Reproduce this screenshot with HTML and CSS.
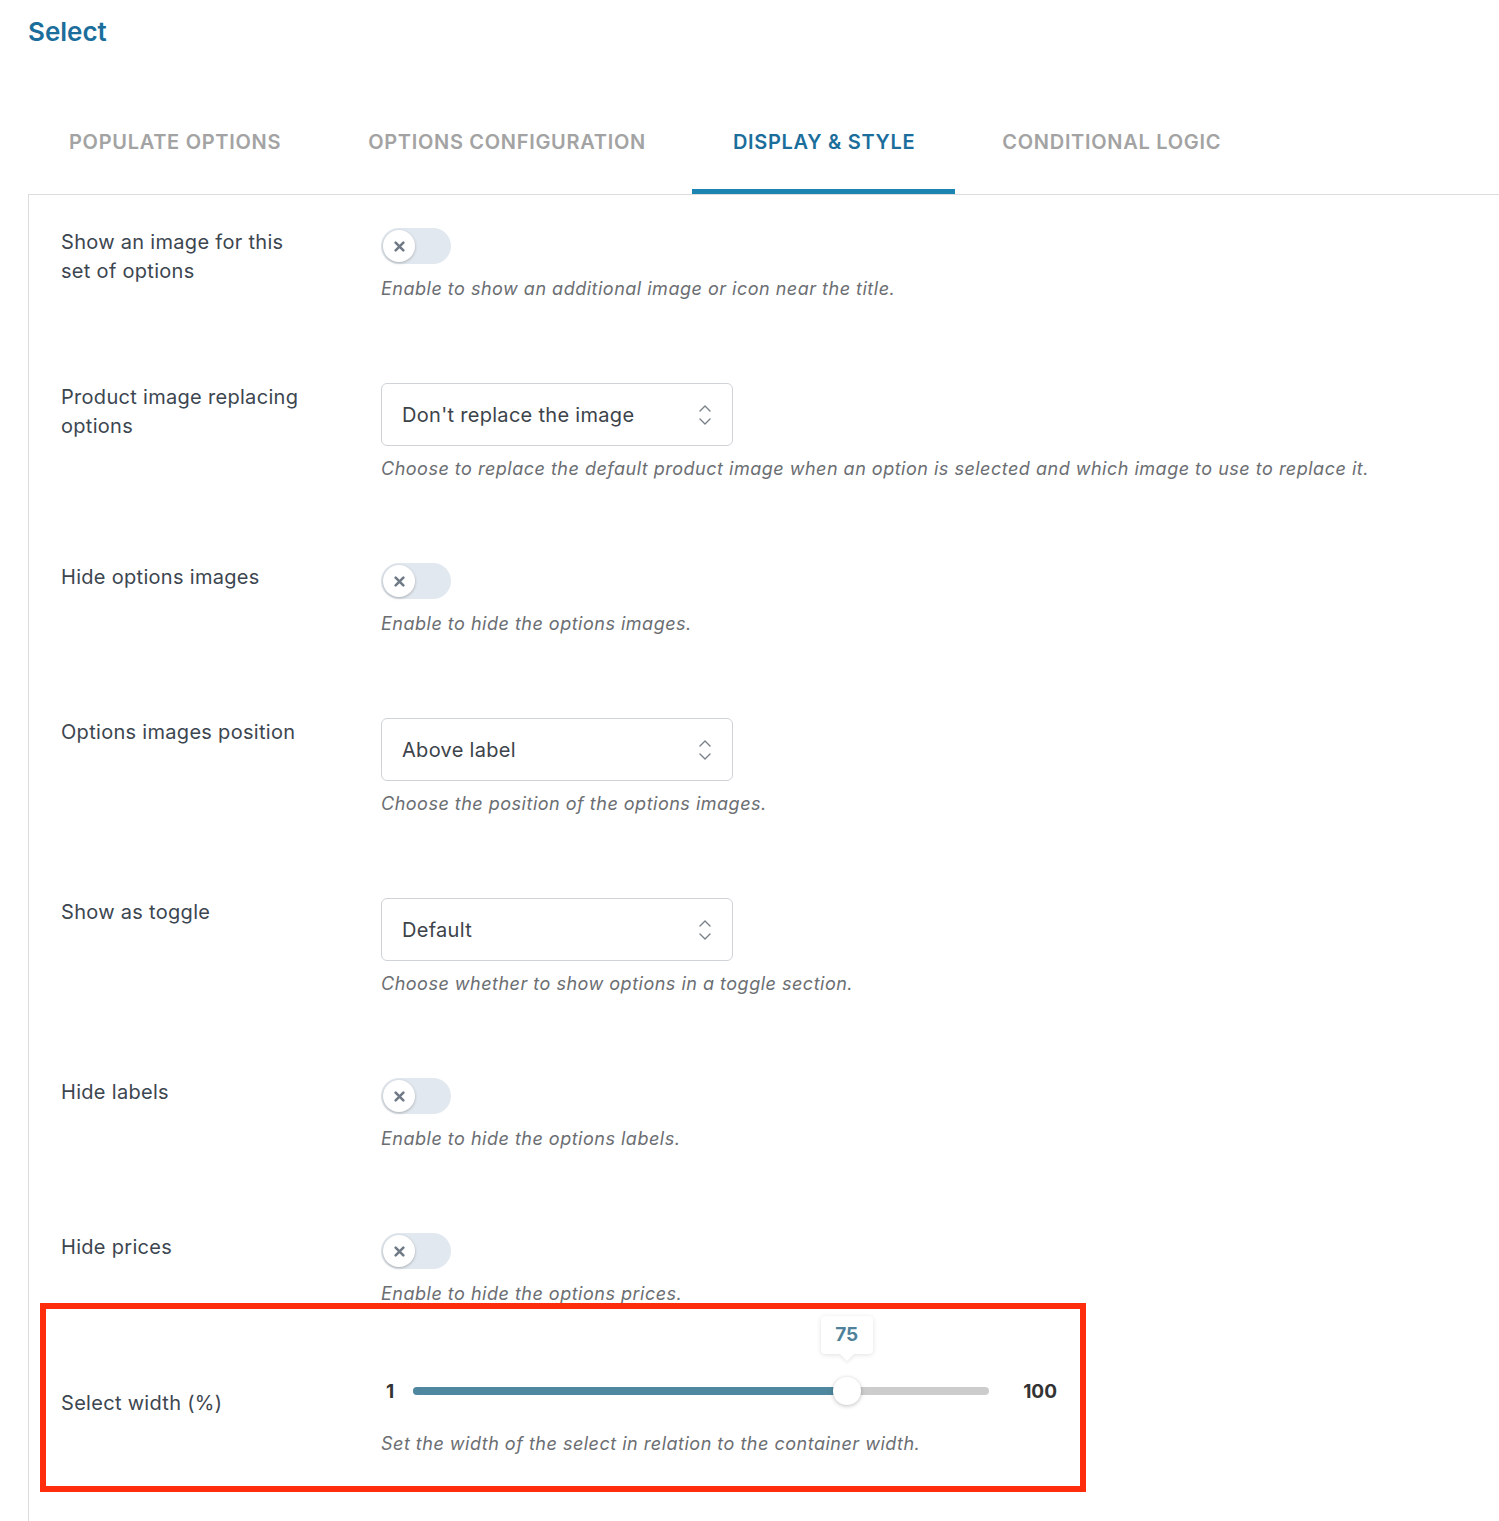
FILE: index.html
```html
<!DOCTYPE html>
<html lang="en">
  <head>
    <meta charset="UTF-8" />
    <meta name="viewport" content="width=device-width, initial-scale=1.0" />
    <title>Select</title>
    <link rel="stylesheet" href="styles.css">
  </head>
  <body>
    <!-- Title -->
    <h1 class="title">Select</h1>

    <!-- Tabs -->
    <ul class="tabs">
      <li class="tab">Populate options</li>
      <li class="tab">Options configuration</li>
      <li class="tab active">Display &amp; style</li>
      <li class="tab">Conditional logic</li>
    </ul>

    <!-- Panel -->
    <div class="panel">
      <div class="row">
        <div class="label">Show an image for this<br>set of options</div>
        <div class="field">
          <span class="toggle"><span class="knob"><svg width="11" height="11" viewBox="0 0 10 10"><path d="M1.5 1.5 L8.5 8.5 M8.5 1.5 L1.5 8.5" stroke="#6f7a86" stroke-width="2.3" stroke-linecap="round"/></svg></span></span>
          <p class="desc">Enable to show an additional image or icon near the title.</p>
        </div>
      </div>

      <div class="row">
        <div class="label">Product image replacing<br>options</div>
        <div class="field">
          <div class="select">
            <span>Don't replace the image</span>
            <svg class="chev" width="14" height="24" viewBox="0 0 14 24"><path d="M2 8 L7 3 L12 8 M2 16 L7 21 L12 16" fill="none" stroke="#7a8088" stroke-width="1.4" stroke-linecap="round" stroke-linejoin="round"/></svg>
          </div>
          <p class="desc">Choose to replace the default product image when an option is selected and which image to use to replace it.</p>
        </div>
      </div>

      <div class="row">
        <div class="label">Hide options images</div>
        <div class="field">
          <span class="toggle"><span class="knob"><svg width="11" height="11" viewBox="0 0 10 10"><path d="M1.5 1.5 L8.5 8.5 M8.5 1.5 L1.5 8.5" stroke="#6f7a86" stroke-width="2.3" stroke-linecap="round"/></svg></span></span>
          <p class="desc">Enable to hide the options images.</p>
        </div>
      </div>

      <div class="row">
        <div class="label">Options images position</div>
        <div class="field">
          <div class="select">
            <span>Above label</span>
            <svg class="chev" width="14" height="24" viewBox="0 0 14 24"><path d="M2 8 L7 3 L12 8 M2 16 L7 21 L12 16" fill="none" stroke="#7a8088" stroke-width="1.4" stroke-linecap="round" stroke-linejoin="round"/></svg>
          </div>
          <p class="desc">Choose the position of the options images.</p>
        </div>
      </div>

      <div class="row">
        <div class="label">Show as toggle</div>
        <div class="field">
          <div class="select">
            <span>Default</span>
            <svg class="chev" width="14" height="24" viewBox="0 0 14 24"><path d="M2 8 L7 3 L12 8 M2 16 L7 21 L12 16" fill="none" stroke="#7a8088" stroke-width="1.4" stroke-linecap="round" stroke-linejoin="round"/></svg>
          </div>
          <p class="desc">Choose whether to show options in a toggle section.</p>
        </div>
      </div>

      <div class="row">
        <div class="label">Hide labels</div>
        <div class="field">
          <span class="toggle"><span class="knob"><svg width="11" height="11" viewBox="0 0 10 10"><path d="M1.5 1.5 L8.5 8.5 M8.5 1.5 L1.5 8.5" stroke="#6f7a86" stroke-width="2.3" stroke-linecap="round"/></svg></span></span>
          <p class="desc">Enable to hide the options labels.</p>
        </div>
      </div>

      <div class="row">
        <div class="label">Hide prices</div>
        <div class="field">
          <span class="toggle"><span class="knob"><svg width="11" height="11" viewBox="0 0 10 10"><path d="M1.5 1.5 L8.5 8.5 M8.5 1.5 L1.5 8.5" stroke="#6f7a86" stroke-width="2.3" stroke-linecap="round"/></svg></span></span>
          <p class="desc">Enable to hide the options prices.</p>
        </div>
      </div>

      <div class="row row-slider">
        <div class="label">Select width (%)</div>
        <div class="field">
          <div class="slider">
            <span class="min">1</span>
            <div class="track">
              <div class="fill" style="width: 75.3%"></div>
              <div class="thumb" style="left: 75.3%">
                <span class="bubble">75</span>
              </div>
            </div>
            <span class="max">100</span>
          </div>
          <p class="desc">Set the width of the select in relation to the container width.</p>
        </div>
      </div>
    </div>

    <!-- highlight frame -->
    <div class="highlight"></div>
  </body>
</html>
```

FILE: styles.css
```css
body {
  margin: 0;
  font-family: Inter, "Noto Sans", sans-serif;
  background-color: #fff;
  color: #3c4650;
  position: relative;
  overflow: hidden;
}

.title {
  margin: 0;
  padding: 15px 0 0 28px;
  font-size: 26px;
  font-weight: 600;
  color: #1b6e9b;
  line-height: 34px;
}

.tabs {
  list-style-type: none;
  margin: 46px 0 0 28px;
  padding: 0;
  display: flex;
}

.tab {
  padding: 35px 46px 0 41px;
  height: 99px;
  box-sizing: border-box;
  font-size: 20px;
  font-weight: 600;
  letter-spacing: 0.7px;
  text-transform: uppercase;
  color: #a3a3a3;
  border-bottom: 5px solid transparent;
}

.tab.active {
  color: #1b6e9b;
  border-bottom-color: #1c84b1;
  padding: 35px 40px 0 41px;
  margin-right: 6px;
}

.panel {
  margin-left: 28px;
  border-top: 1px solid #dcdcdc;
  border-left: 1px solid #dcdcdc;
  padding: 33px 0 120px 32px;
}

.row {
  display: grid;
  grid-template-columns: 320px 1fr;
  padding-bottom: 81px;
}

.label {
  font-size: 20px;
  line-height: 29px;
  letter-spacing: 0.3px;
  color: #3c4650;
}

.field {
  display: flex;
  flex-direction: column;
  align-items: flex-start;
}

.desc {
  margin: 12px 0 0;
  font-size: 18px;
  line-height: 26px;
  font-style: italic;
  letter-spacing: 0.5px;
  color: #6b6e72;
}

.toggle {
  display: inline-block;
  width: 70px;
  height: 36px;
  border-radius: 18px;
  background-color: #e2e8ef;
  position: relative;
}

.knob {
  position: absolute;
  left: 2px;
  top: 2px;
  width: 32px;
  height: 32px;
  border-radius: 50%;
  background-color: #fff;
  box-shadow: 0 1px 3px rgba(0, 0, 0, 0.25);
  display: flex;
  align-items: center;
  justify-content: center;
}

.select {
  width: 352px;
  height: 63px;
  box-sizing: border-box;
  border: 1px solid #cfd3d7;
  border-radius: 6px;
  display: flex;
  align-items: center;
  justify-content: space-between;
  padding: 0 20px 0 20px;
  font-size: 20px;
  letter-spacing: 0.3px;
  color: #3c434a;
}

.select + .desc {
  margin-top: 10px;
}

.row-slider .label {
  padding-top: 1px;
}

.row-slider .field {
  align-items: stretch;
}

.slider {
  display: flex;
  align-items: center;
  width: 676px;
  height: 26px;
  margin-top: -10px;
  font-weight: 700;
  font-size: 19px;
  color: #333;
}

.min {
  width: 32px;
  padding-left: 5px;
  box-sizing: border-box;
}

.max {
  width: 68px;
  text-align: right;
}

.track {
  flex: 1;
  height: 8px;
  border-radius: 4px;
  background-color: #cccccc;
  position: relative;
}

.fill {
  height: 100%;
  border-radius: 4px;
  background-color: #4f889e;
}

.thumb {
  position: absolute;
  top: 50%;
  width: 28px;
  height: 28px;
  margin: -14px 0 0 -14px;
  border-radius: 50%;
  background-color: #fff;
  box-shadow: 0 1px 4px rgba(0, 0, 0, 0.25);
}

.bubble {
  position: absolute;
  left: 50%;
  bottom: 51px;
  transform: translateX(-50%);
  width: 52px;
  height: 38px;
  line-height: 38px;
  text-align: center;
  background-color: #fff;
  border-radius: 4px;
  box-shadow: 0 1px 5px rgba(0, 0, 0, 0.12);
  color: #4f829a;
  font-size: 19px;
}

.bubble::after {
  content: "";
  position: absolute;
  left: 50%;
  bottom: -5px;
  margin-left: -5px;
  width: 10px;
  height: 10px;
  background-color: #fff;
  transform: rotate(45deg);
  box-shadow: 2px 2px 3px rgba(0, 0, 0, 0.06);
}

.row-slider .desc {
  margin-top: 27px;
}

.highlight {
  position: absolute;
  left: 40px;
  top: 1303px;
  width: 1046px;
  height: 189px;
  box-sizing: border-box;
  border: 6px solid #ff2d0c;
}
```
